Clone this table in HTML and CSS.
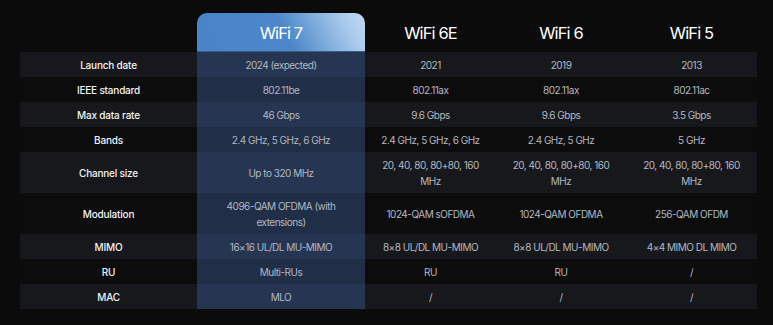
FILE: index.html
```html
<!DOCTYPE html>
<html lang="en">
<head>
<meta charset="utf-8">
<title>WiFi comparison</title>
<link rel="stylesheet" href="styles.css">
</head>
<body>
<div class="table">
  <div class="row head">
    <div class="cell"></div>
    <div class="cell hl card">WiFi 7</div>
    <div class="cell">WiFi 6E</div>
    <div class="cell">WiFi 6</div>
    <div class="cell">WiFi 5</div>
  </div>
  <div class="row odd">
    <div class="cell label">Launch date</div>
    <div class="cell hl">2024 (expected)</div>
    <div class="cell">2021</div>
    <div class="cell">2019</div>
    <div class="cell">2013</div>
  </div>
  <div class="row">
    <div class="cell label">IEEE standard</div>
    <div class="cell hl">802.11be</div>
    <div class="cell">802.11ax</div>
    <div class="cell">802.11ax</div>
    <div class="cell">802.11ac</div>
  </div>
  <div class="row odd">
    <div class="cell label">Max data rate</div>
    <div class="cell hl">46 Gbps</div>
    <div class="cell">9.6 Gbps</div>
    <div class="cell">9.6 Gbps</div>
    <div class="cell">3.5 Gbps</div>
  </div>
  <div class="row">
    <div class="cell label">Bands</div>
    <div class="cell hl">2.4 GHz, 5 GHz, 6 GHz</div>
    <div class="cell">2.4 GHz, 5 GHz, 6 GHz</div>
    <div class="cell">2.4 GHz, 5 GHz</div>
    <div class="cell">5 GHz</div>
  </div>
  <div class="row odd tall">
    <div class="cell label">Channel size</div>
    <div class="cell hl">Up to 320 MHz</div>
    <div class="cell">20, 40, 80, 80+80, 160 MHz</div>
    <div class="cell">20, 40, 80, 80+80, 160 MHz</div>
    <div class="cell">20, 40, 80, 80+80, 160 MHz</div>
  </div>
  <div class="row tall">
    <div class="cell label">Modulation</div>
    <div class="cell hl">4096-QAM OFDMA (with extensions)</div>
    <div class="cell">1024-QAM sOFDMA</div>
    <div class="cell">1024-QAM OFDMA</div>
    <div class="cell">256-QAM OFDM</div>
  </div>
  <div class="row odd">
    <div class="cell label">MIMO</div>
    <div class="cell hl">16×16 UL/DL MU-MIMO</div>
    <div class="cell">8×8 UL/DL MU-MIMO</div>
    <div class="cell">8×8 UL/DL MU-MIMO</div>
    <div class="cell">4×4 MIMO DL MIMO</div>
  </div>
  <div class="row">
    <div class="cell label">RU</div>
    <div class="cell hl">Multi-RUs</div>
    <div class="cell">RU</div>
    <div class="cell">RU</div>
    <div class="cell">/</div>
  </div>
  <div class="row odd">
    <div class="cell label">MAC</div>
    <div class="cell hl">MLO</div>
    <div class="cell">/</div>
    <div class="cell">/</div>
    <div class="cell">/</div>
  </div>
</div>
</body>
</html>
```
FILE: styles.css
```css
html, body {
  margin: 0;
  padding: 0;
  background: #0b0b0b;
}
body {
  font-family: Inter, "Noto Sans", sans-serif;
  color: #b4b8c0;
  font-size: 10px;
  letter-spacing: -0.5px;
}
.table {
  display: flex;
  flex-direction: column;
  width: 737px;
  margin-left: 20px;
  padding-top: 13px;
}
.row {
  display: grid;
  grid-template-columns: 177px 168px 131px 130px 131px;
  height: 25px;
  background: #0c0c0d;
}
.row.odd {
  background: #17181c;
}
.row.tall {
  height: 41px;
}
.row.head {
  height: 39px;
  background: transparent;
}
.cell {
  display: flex;
  align-items: center;
  justify-content: center;
  text-align: center;
  padding: 0 8px;
  line-height: 16px;
}
.label {
  color: #f2f3f5;
  font-weight: 500;
  letter-spacing: -0.2px;
}
.hl {
  background: #202e47;
}
.odd .hl {
  background: #263652;
}
.head .cell {
  color: #ffffff;
  font-size: 16.5px;
  letter-spacing: -0.9px;
  padding-top: 1px;
}
.head .card {
  border-radius: 10px 10px 0 0;
  background: linear-gradient(62deg, #4a84c7 0%, #4c87c9 52%, #a7c9eb 86%, #c0dbf3 100%);
  border-bottom: 1px solid #3c5d88;
}
```
